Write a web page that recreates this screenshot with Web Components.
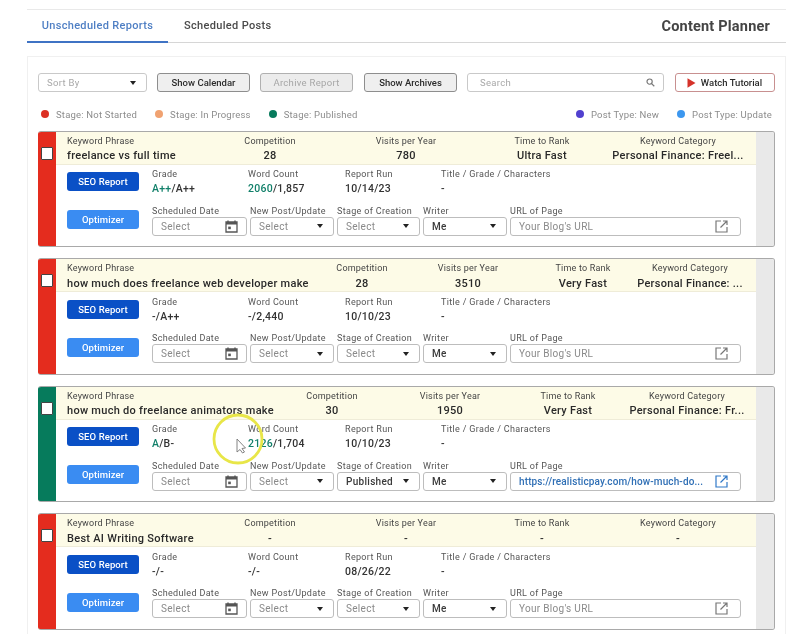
<!DOCTYPE html>
<html lang="en"><head><meta charset="utf-8"><title>Content Planner</title>
<style>
html,body{margin:0;padding:0;background:#fff;height:635px;overflow:hidden}
body{font-family:Roboto,"Liberation Sans",sans-serif;color:#333}
</style></head><body>
<cp-app>
  <cp-tabs></cp-tabs>
  <cp-panel>
    <cp-toolbar></cp-toolbar>
    <cp-legend></cp-legend>
    <report-card stripe="#e42c1e" cols="135px 136px 136px 136px 136px" kw="freelance vs full time" comp="28" visits="780" time="Ultra Fast" cat="Personal Finance: Freel..." grade="A++" grade2="/A++" wc="2060" wc2="/1,857" run="10/14/23"></report-card>
    <report-card stripe="#e42c1e" cols="254.5px 81px 131px 99px 115px" kw="how much does freelance web developer make" comp="28" visits="3510" time="Very Fast" cat="Personal Finance: ..." grade="" grade2="-/A++" wc="" wc2="-/2,440" run="10/10/23"></report-card>
    <report-card stripe="#067b5c" cols="206px 118px 118px 118px 120px" kw="how much do freelance animators make" comp="30" visits="1950" time="Very Fast" cat="Personal Finance: Fr..." grade="A" grade2="/B-" wc="2126" wc2="/1,704" run="10/10/23" stage="Published" url="https://realisticpay.com/how-much-do..."></report-card>
    <report-card stripe="#e42c1e" cols="135px 136px 136px 136px 136px" kw="Best AI Writing Software" comp="-" visits="-" time="-" cat="-" grade="" grade2="-/-" wc="" wc2="-/-" run="08/26/22"></report-card>
  </cp-panel>
  <cp-pointer></cp-pointer>
</cp-app>
<script>
const shadow=(el,html)=>{el.attachShadow({mode:'open'}).innerHTML=html;};
const esc=s=>String(s??'').replace(/&/g,'&amp;').replace(/"/g,'&quot;').replace(/</g,'&lt;');

customElements.define('cp-app',class extends HTMLElement{constructor(){super();shadow(this,`<style>
:host{display:block;width:759px;height:635px;box-sizing:border-box;margin-left:27px;padding-top:9px;position:relative;overflow:hidden;font-family:Roboto,"Liberation Sans",sans-serif;filter:blur(.3px)}
</style><slot></slot>`);}});

customElements.define('cp-tabs',class extends HTMLElement{constructor(){super();shadow(this,`<style>
:host{display:flex;align-items:stretch;height:32px;border-top:1px solid #e9e9e9;border-bottom:1px solid #d6d6d6;margin-bottom:13px}
.t{font-size:11px;font-weight:500;letter-spacing:.33px;display:flex;align-items:center;justify-content:center;margin-bottom:-1px;box-sizing:content-box}
.a{width:141px;color:#4f7fc4;border-bottom:2px solid #3f73c4}
.b{margin-left:16px;color:#4a4a4a;border-bottom:2px solid transparent}
.h{margin-left:auto;margin-right:16px;align-self:center;font-size:14.5px;letter-spacing:.2px;font-weight:700;color:#444}
</style><div class="t a">Unscheduled Reports</div><div class="t b">Scheduled Posts</div><div class="h">Content Planner</div>`);}});

customElements.define('cp-panel',class extends HTMLElement{constructor(){super();shadow(this,`<style>
:host{display:flex;flex-direction:column;gap:11px;padding:16px 10px 4px 10px;border:1px solid #f0f0f0;border-bottom:0;box-sizing:border-box}
</style><slot></slot>`);}});

customElements.define('cp-toolbar',class extends HTMLElement{constructor(){super();shadow(this,`<style>
:host{display:flex;align-items:stretch;height:19px;font-size:9.5px}
*{box-sizing:border-box}
.in{border:1px solid #c9c9c9;border-radius:3px;background:#fff;display:flex;align-items:center;color:#a8a8a8;letter-spacing:.3px}
.sort{width:109px;padding:0 10px 0 8px;justify-content:space-between}
.caret{width:0;height:0;border:3.5px solid transparent;border-top:4px solid #222;border-bottom:0}
.btn{width:93px;margin-left:10px;border:1px solid #8e8e8e;border-radius:3px;background:#efefef;display:flex;align-items:center;justify-content:center;font-weight:500;color:#2c2c2c;letter-spacing:0}
.off{border-color:#b0b0b0;background:#ececec;color:#a6a6a6;font-weight:400;letter-spacing:.3px}
.search{width:197px;margin-left:10px;padding:0 8px 0 12px;justify-content:space-between}
.watch{width:100px;margin-left:11px;border:1px solid #c89090;border-radius:3px;background:#fff;display:flex;align-items:center;justify-content:center;gap:5px;padding-right:1px;font-weight:500;color:#2c2c2c}
</style>
<div class="in sort"><span>Sort By</span><span class="caret"></span></div>
<div class="btn">Show Calendar</div><div class="btn off">Archive Report</div><div class="btn" style="margin-left:11px">Show Archives</div>
<div class="in search"><span>Search</span><svg width="9" height="9" viewBox="0 0 10 10" fill="none" stroke="#777" stroke-width="1.3"><circle cx="4" cy="4" r="2.9"/><path d="M6.2 6.2 9.2 9.2"/></svg></div>
<div class="watch"><svg width="9" height="10" viewBox="0 0 9 10"><path d="M.5 .3 8.5 5 .5 9.7Z" fill="#d5322a"/></svg><span>Watch Tutorial</span></div>`);}});

customElements.define('cp-legend',class extends HTMLElement{constructor(){super();
const it=(c,t)=>`<span class="i"><i style="background:${c}"></i>${t}</span>`;
shadow(this,`<style>
:host{display:flex;align-items:center;height:14px;margin-top:4px;margin-bottom:-1.5px;padding:0 3px;font-size:9.5px;letter-spacing:.2px;color:#8c8c8c}
.i{display:flex;align-items:center;gap:7px}
.i+.i{margin-left:18px}
i{width:8px;height:8px;border-radius:50%;display:block}
.sp{flex:1}
</style>${it('#dc3023','Stage: Not Started')}${it('#f0a271','Stage: In Progress')}${it('#077a5c','Stage: Published')}<span class="sp"></span>
${it('#5140cf','Post Type: New')}${it('#3c97ef','Post Type: Update')}`);}});

customElements.define('cp-field',class extends HTMLElement{constructor(){super();shadow(this,`<style>
:host{display:flex;flex-direction:column;min-width:0}
.l{font-size:9px;letter-spacing:.33px;color:#555;line-height:12px;white-space:nowrap}
.v{font-size:10.5px;font-weight:500;letter-spacing:.25px;color:#333;line-height:14px;margin-top:2px;white-space:nowrap}
::slotted(b){font-weight:500;color:#12806a}
</style><div class="l"><slot name="label"></slot></div><div class="v"><slot></slot></div>`);}});

customElements.define('cp-input',class extends HTMLElement{
static get observedAttributes(){return ['label']}
constructor(){super();shadow(this,`<style>
:host{display:flex;flex-direction:column;min-width:0}
.l{font-size:9px;letter-spacing:.33px;color:#555;line-height:12px;white-space:nowrap;height:11px}
.box{height:19px;margin-top:1px;box-sizing:border-box;border:1px solid #bdbdbd;border-radius:3px;display:flex;align-items:center;justify-content:space-between;padding:0 8px;font-size:10px;letter-spacing:.3px;color:#8a8a8a;white-space:nowrap;background:#fff}
:host([strong]) .box{font-weight:500;color:#3a3a3a}
:host([link]) .box{font-weight:500;color:#2f6fb5;letter-spacing:.12px}
</style><div class="l"></div><div class="box"><span><slot></slot></span><slot name="end"></slot></div>`);}
attributeChangedCallback(n,o,v){this.shadowRoot.querySelector('.l').textContent=v;}
});

customElements.define('report-btn',class extends HTMLElement{constructor(){super();shadow(this,`<style>
:host{display:flex;align-items:center;justify-content:center;width:72px;height:19px;border-radius:3px;color:#fff;font-size:9.5px;font-weight:500;background:var(--bg);letter-spacing:.1px}
</style><slot></slot>`);}});

customElements.define('report-card',class extends HTMLElement{connectedCallback(){
const a=n=>esc(this.getAttribute(n));
const caret='<span slot="end" style="width:0;height:0;margin-right:2px;border:3.5px solid transparent;border-top:4px solid #222;border-bottom:0"></span>';
const cal=`<svg slot="end" width="13" height="13" viewBox="0 0 13 13"><path d="M3 .5V2.5M10 .5V2.5" stroke="#555" stroke-width="1.4"/><path d="M1 2h11v10H1Z" fill="none" stroke="#555" stroke-width="1.3"/><path d="M1 2h11v2.6H1Z" fill="#555"/><rect x="3.2" y="6.6" width="2.6" height="2.6" fill="#555"/></svg>`;
const isUrl=this.hasAttribute('url');
const ec=isUrl?'#2f78c8':'#777';
const ext=`<svg slot="end" width="13" height="13" viewBox="0 0 13 13" fill="none" stroke="${ec}" stroke-width="1.2" style="margin-right:4px"><path d="M6 1H1v11h11V7"/><path d="M5.5 7.5 12 1M8 1h4v4"/></svg>`;
const g=a('grade'),w=a('wc');
shadow(this,`<style>
:host{display:grid;grid-template-columns:18px 1fr 18px;height:116.5px;flex:none;box-sizing:border-box;border:1px solid #a9a9a9;border-left:0;border-radius:3px;font-family:Roboto,"Liberation Sans",sans-serif;background:#fff;overflow:hidden}
*{box-sizing:border-box}
.st{background:${this.getAttribute('stripe')};display:flex;justify-content:center;padding-top:15px}
.ck{width:12px;height:13px;background:#fff;border:1.5px solid #444;border-radius:1px}
.main{display:flex;flex-direction:column;min-width:0}
.hd{height:33px;background:#fdfbe7;border-bottom:1px solid #efecd8;display:grid;grid-template-columns:${this.getAttribute('cols')};padding:3px 0 0 11px}
.hc{display:flex;flex-direction:column;align-items:center;white-space:nowrap;min-width:0}
.hc:first-child{align-items:flex-start}
.hl{font-size:9px;letter-spacing:.2px;color:#444;line-height:12px}
.hv{font-size:11px;font-weight:500;letter-spacing:.28px;color:#2a2a2a;line-height:14px;margin-top:2.5px}
.rest{width:18px;background:#e9e9e9}
.bd{display:grid;grid-template-columns:72px 1fr;column-gap:13px;padding:3px 16px 0 11px}
.r1{display:grid;grid-template-columns:96px 97px 96px 1fr;height:33px;padding-top:.5px}
.r2{display:grid;grid-template-columns:95px 84px 83px 84px 231px;column-gap:3px;margin-top:4px}
.btns{display:flex;flex-direction:column;gap:19px;padding-top:4.5px}
</style>
<div class="st"><div class="ck"></div></div>
<div class="main">
 <div class="hd">
  <div class="hc"><span class="hl">Keyword Phrase</span><span class="hv">${a('kw')}</span></div>
  <div class="hc"><span class="hl">Competition</span><span class="hv">${a('comp')}</span></div>
  <div class="hc"><span class="hl">Visits per Year</span><span class="hv">${a('visits')}</span></div>
  <div class="hc"><span class="hl">Time to Rank</span><span class="hv">${a('time')}</span></div>
  <div class="hc"><span class="hl">Keyword Category</span><span class="hv">${a('cat')}</span></div>
 </div>
 <div class="bd">
  <div class="btns"><report-btn style="--bg:#0a50c6">SEO Report</report-btn><report-btn style="--bg:#3a8cf2">Optimizer</report-btn></div>
  <div>
   <div class="r1">
    <cp-field><span slot="label">Grade</span>${g?`<b>${g}</b>`:''}${a('grade2')}</cp-field>
    <cp-field><span slot="label">Word Count</span>${w?`<b>${w}</b>`:''}${a('wc2')}</cp-field>
    <cp-field><span slot="label">Report Run</span>${a('run')}</cp-field>
    <cp-field><span slot="label">Title / Grade / Characters</span>-</cp-field>
   </div>
   <div class="r2">
    <cp-input label="Scheduled Date">Select${cal}</cp-input>
    <cp-input label="New Post/Update">Select${caret}</cp-input>
    <cp-input label="Stage of Creation" ${this.hasAttribute('stage')?'strong':''}>${a('stage')||'Select'}${caret}</cp-input>
    <cp-input label="Writer" strong>Me${caret}</cp-input>
    <cp-input label="URL of Page" ${isUrl?'link':''}>${a('url')||"Your Blog's URL"}${ext}</cp-input>
   </div>
  </div>
 </div>
</div>
<div class="rest"></div>`);}});

customElements.define('cp-pointer',class extends HTMLElement{constructor(){super();shadow(this,`<style>
:host{position:absolute;left:184px;top:413px;width:54px;height:52px;pointer-events:none}
</style><svg width="54" height="52" viewBox="0 0 54 52"><circle cx="27" cy="26" r="24" fill="none" stroke="#e8e648" stroke-width="2.8"/><path d="M26 26V39L29 36.5 31.5 40 33.5 39 31 35.5 34.5 35Z" fill="#fff" stroke="#777" stroke-width=".9"/></svg>`);}});
</script>
</body></html>
